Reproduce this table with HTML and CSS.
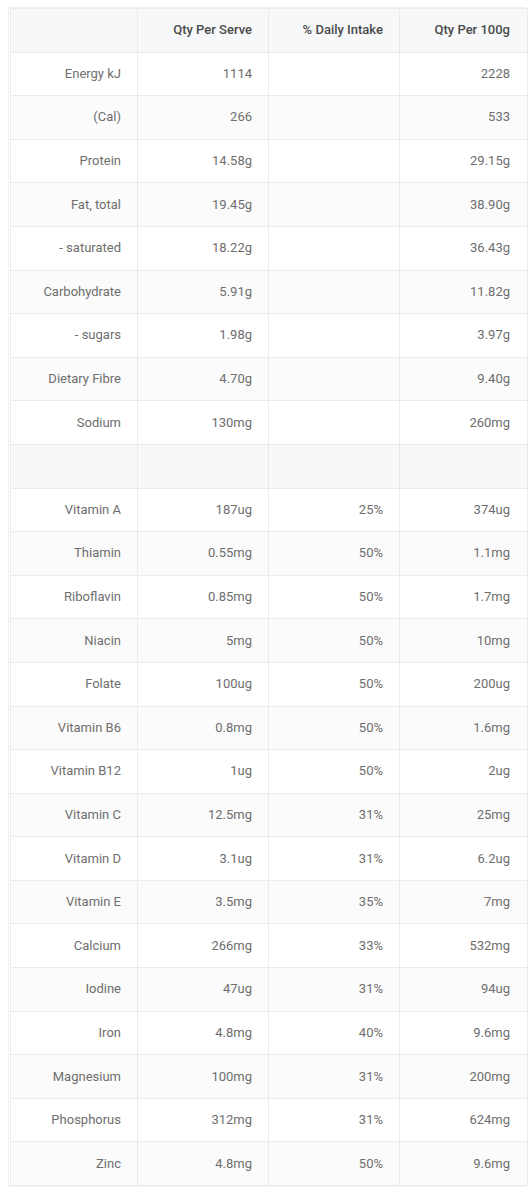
FILE: index.html
```html
<!DOCTYPE html>
<html>
<head>
<meta charset="utf-8">
<link rel="stylesheet" href="styles.css">
</head>
<body>
<div class="wrap">
<table class="nutrition">
<colgroup><col class="c1"><col class="c2"><col class="c3"><col class="c4"></colgroup>
<thead>
<tr><th></th><th>Qty Per Serve</th><th>% Daily Intake</th><th>Qty Per 100g</th></tr>
</thead>
<tbody>
<tr><td>Energy kJ</td><td>1114</td><td></td><td>2228</td></tr>
<tr><td>(Cal)</td><td>266</td><td></td><td>533</td></tr>
<tr><td>Protein</td><td>14.58g</td><td></td><td>29.15g</td></tr>
<tr><td>Fat, total</td><td>19.45g</td><td></td><td>38.90g</td></tr>
<tr><td>- saturated</td><td>18.22g</td><td></td><td>36.43g</td></tr>
<tr><td>Carbohydrate</td><td>5.91g</td><td></td><td>11.82g</td></tr>
<tr><td>- sugars</td><td>1.98g</td><td></td><td>3.97g</td></tr>
<tr><td>Dietary Fibre</td><td>4.70g</td><td></td><td>9.40g</td></tr>
<tr><td>Sodium</td><td>130mg</td><td></td><td>260mg</td></tr>
<tr class="blank"><td></td><td></td><td></td><td></td></tr>
<tr><td>Vitamin A</td><td>187ug</td><td>25%</td><td>374ug</td></tr>
<tr><td>Thiamin</td><td>0.55mg</td><td>50%</td><td>1.1mg</td></tr>
<tr><td>Riboflavin</td><td>0.85mg</td><td>50%</td><td>1.7mg</td></tr>
<tr><td>Niacin</td><td>5mg</td><td>50%</td><td>10mg</td></tr>
<tr><td>Folate</td><td>100ug</td><td>50%</td><td>200ug</td></tr>
<tr><td>Vitamin B6</td><td>0.8mg</td><td>50%</td><td>1.6mg</td></tr>
<tr><td>Vitamin B12</td><td>1ug</td><td>50%</td><td>2ug</td></tr>
<tr><td>Vitamin C</td><td>12.5mg</td><td>31%</td><td>25mg</td></tr>
<tr><td>Vitamin D</td><td>3.1ug</td><td>31%</td><td>6.2ug</td></tr>
<tr><td>Vitamin E</td><td>3.5mg</td><td>35%</td><td>7mg</td></tr>
<tr><td>Calcium</td><td>266mg</td><td>33%</td><td>532mg</td></tr>
<tr><td>Iodine</td><td>47ug</td><td>31%</td><td>94ug</td></tr>
<tr><td>Iron</td><td>4.8mg</td><td>40%</td><td>9.6mg</td></tr>
<tr><td>Magnesium</td><td>100mg</td><td>31%</td><td>200mg</td></tr>
<tr><td>Phosphorus</td><td>312mg</td><td>31%</td><td>624mg</td></tr>
<tr><td>Zinc</td><td>4.8mg</td><td>50%</td><td>9.6mg</td></tr>
</tbody>
</table>
</div>
</body>
</html>
```

FILE: styles.css
```css
html, body {
  margin: 0;
  padding: 0;
  background: #ffffff;
}

.wrap {
  margin: 7px 0 0 8px;
  width: 518px;
  border-top: 1px solid #f0f0f0;
  border-left: 1px solid #f0f0f0;
  border-bottom: 1px solid #f2f2f2;
  padding-left: 1px;
  box-sizing: border-box;
}

.nutrition {
  width: 517px;
  table-layout: fixed;
  border-collapse: collapse;
  font-family: Roboto, "Liberation Sans", Arial, sans-serif;
  font-size: 13px;
  color: #6e6e6e;
}

.c1 { width: 127px; }
.c2 { width: 131px; }
.c3 { width: 131px; }
.c4 { width: 128px; }

.nutrition th,
.nutrition td {
  border: 1px solid #ebebeb;
  text-align: right;
  padding: 0 16px 0 8px;
  height: 42.6px;
  line-height: 16px;
  white-space: nowrap;
}

.nutrition td:last-child,
.nutrition th:last-child {
  padding-right: 17px;
}

.nutrition th {
  background: #f7f8f9;
  color: #4a4a4a;
  font-weight: 500;
}

.nutrition tbody tr:nth-child(even) td {
  background: #fbfbfb;
}

.nutrition tbody tr.blank td {
  background: #f8f8f8;
}
```
